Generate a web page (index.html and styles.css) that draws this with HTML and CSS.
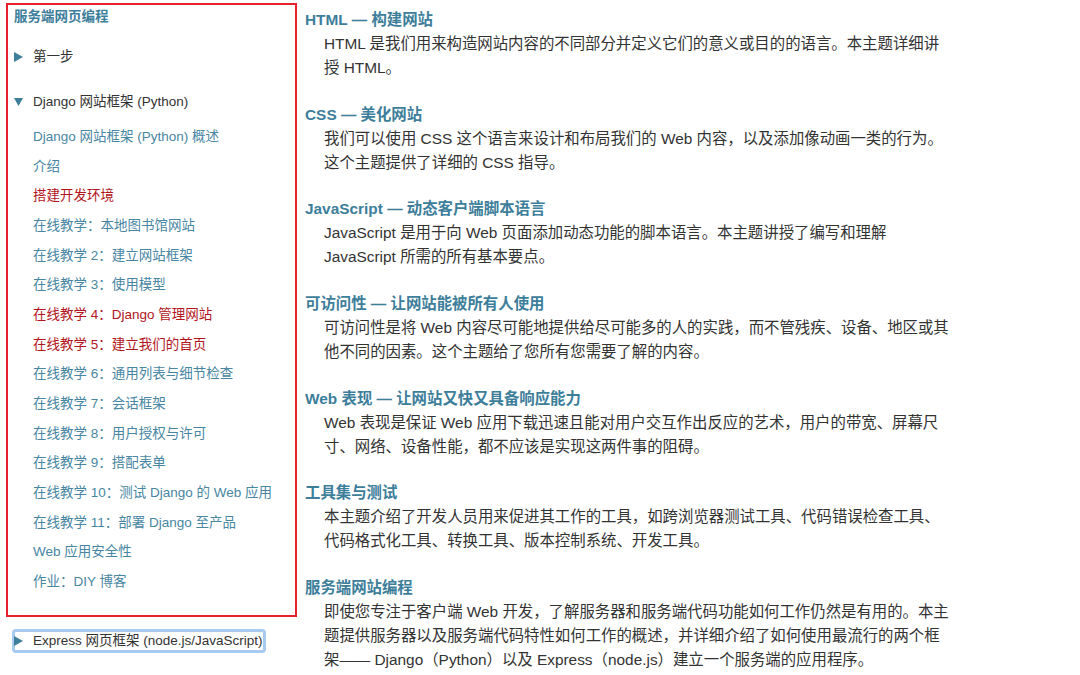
FILE: index.html
```html
<!DOCTYPE html>
<html lang="zh-CN">

<head>
  <meta charset="utf-8">
  <title>Web 开发学习</title>
  <link rel="stylesheet" href="styles.css">
</head>

<body>
  <aside class="side">
    <div class="side_box">
      <div class="side_title">服务端网页编程</div>
      <div class="toggle closed first">
        <span class="arrow"><svg width="9" height="10" viewBox="0 0 9 10"><path d="M0 0 L9 5 L0 10 Z" /></svg></span>第一步
      </div>
      <div class="toggle open">
        <span class="arrow"><svg width="9" height="8" viewBox="0 0 9 8"><path d="M0 0 L9 0 L4.5 8 Z" /></svg></span>Django 网站框架 (Python)
      </div>
      <ul class="sub">
        <li><a href="#">Django 网站框架 (Python) 概述</a></li>
        <li><a href="#">介绍</a></li>
        <li><a href="#" class="seen">搭建开发环境</a></li>
        <li><a href="#">在线教学：本地图书馆网站</a></li>
        <li><a href="#">在线教学 2：建立网站框架</a></li>
        <li><a href="#">在线教学 3：使用模型</a></li>
        <li><a href="#" class="seen">在线教学 4：Django 管理网站</a></li>
        <li><a href="#" class="seen">在线教学 5：建立我们的首页</a></li>
        <li><a href="#">在线教学 6：通用列表与细节检查</a></li>
        <li><a href="#">在线教学 7：会话框架</a></li>
        <li><a href="#">在线教学 8：用户授权与许可</a></li>
        <li><a href="#">在线教学 9：搭配表单</a></li>
        <li><a href="#">在线教学 10：测试 Django 的 Web 应用</a></li>
        <li><a href="#">在线教学 11：部署 Django 至产品</a></li>
        <li><a href="#">Web 应用安全性</a></li>
        <li><a href="#">作业：DIY 博客</a></li>
      </ul>
    </div>
    <div class="toggle focused">
      <span class="arrow"><svg width="9" height="10" viewBox="0 0 9 10"><path d="M0 0 L9 5 L0 10 Z" /></svg></span>Express 网页框架 (node.js/JavaScript)
    </div>
  </aside>

  <main class="topics">
    <section>
      <h2>HTML — 构建网站</h2>
      <p>HTML 是我们用来构造网站内容的不同部分并定义它们的意义或目的的语言。本主题详细讲授 HTML。</p>
    </section>
    <section>
      <h2>CSS — 美化网站</h2>
      <p>我们可以使用 CSS 这个语言来设计和布局我们的 Web 内容，以及添加像动画一类的行为。这个主题提供了详细的 CSS 指导。</p>
    </section>
    <section>
      <h2>JavaScript — 动态客户端脚本语言</h2>
      <p>JavaScript 是用于向 Web 页面添加动态功能的脚本语言。本主题讲授了编写和理解 JavaScript 所需的所有基本要点。</p>
    </section>
    <section>
      <h2>可访问性 — 让网站能被所有人使用</h2>
      <p>可访问性是将 Web 内容尽可能地提供给尽可能多的人的实践，而不管残疾、设备、地区或其他不同的因素。这个主题给了您所有您需要了解的内容。</p>
    </section>
    <section>
      <h2>Web 表现 — 让网站又快又具备响应能力</h2>
      <p>Web 表现是保证 Web 应用下载迅速且能对用户交互作出反应的艺术，用户的带宽、屏幕尺寸、网络、设备性能，都不应该是实现这两件事的阻碍。</p>
    </section>
    <section>
      <h2>工具集与测试</h2>
      <p>本主题介绍了开发人员用来促进其工作的工具，如跨浏览器测试工具、代码错误检查工具、代码格式化工具、转换工具、版本控制系统、开发工具。</p>
    </section>
    <section>
      <h2>服务端网站编程</h2>
      <p>即使您专注于客户端 Web 开发，了解服务器和服务端代码功能如何工作仍然是有用的。本主题提供服务器以及服务端代码特性如何工作的概述，并详细介绍了如何使用最流行的两个框架—— Django（Python）以及 Express（node.js）建立一个服务端的应用程序。</p>
    </section>
  </main>
</body>

</html>
```

FILE: styles.css
```css
* {
  margin: 0;
  padding: 0;
  box-sizing: border-box;
  font-family: 'Liberation Sans', 'Noto Sans CJK SC', sans-serif;
}

body {
  display: flex;
  align-items: flex-start;
  background: #fff;
  color: #333;
}

.side {
  width: 291px;
  margin: 3px 0 0 6px;
  font-size: 13.5px;
}

.side_box {
  border: 2px solid #e8212b;
  padding: 2px 6px 18px;
}

.side_title {
  line-height: 20px;
  color: #3d7e9a;
  font-weight: 600;
}

.toggle {
  display: flex;
  align-items: center;
  line-height: 20px;
  color: #333;
}

.toggle.first {
  margin-top: 20px;
}

.toggle.open {
  margin-top: 25px;
}

.arrow {
  display: inline-flex;
  align-items: center;
  width: 19px;
  fill: #3d7e9a;
}

.focused {
  display: inline-flex;
  margin: 14px 0 0 8px;
  padding-right: 1px;
  border-radius: 2px;
  outline: 2px solid rgba(94, 158, 230, 0.55);
  box-shadow: inset 0 0 0 1px rgba(60, 130, 215, 0.45);
}

.sub {
  list-style: none;
  margin-top: 10px;
  padding-left: 19px;
}

.sub li {
  line-height: 29.67px;
}

.sub a {
  color: #4886a2;
  text-decoration: none;
}

.sub a.seen {
  color: #b2151d;
}

.topics {
  margin-left: 8px;
  padding-top: 8px;
  font-size: 15.4px;
  line-height: 24px;
}

.topics section {
  margin-bottom: 22.67px;
}

.topics h2 {
  font-size: 15.4px;
  font-weight: bold;
  color: #3d7e9a;
}

.topics p {
  width: 628px;
  margin-left: 19px;
}
```
